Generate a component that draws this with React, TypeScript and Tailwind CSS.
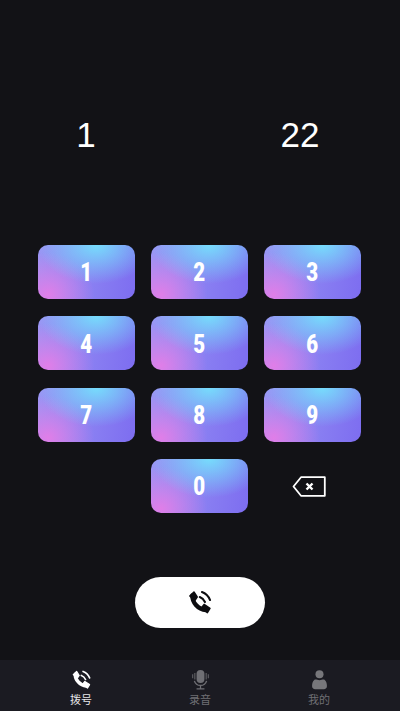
const sans = { fontFamily: '"Liberation Sans", Arial, sans-serif' };

const keys = ['1', '2', '3', '4', '5', '6', '7', '8', '9'];

function PhoneIcon({ className }: { className: string }) {
  return (
    <svg viewBox="0 0 24 24" className={className} fill="none" stroke="currentColor" strokeLinecap="round">
      <path d="M5 6C4.6 12 10 19 17.5 19.4" strokeWidth="4" />
      <path d="M2.6 6.4L6.4 2.8L9.4 7.4L7.2 10.6Z" fill="currentColor" strokeWidth="1.4" strokeLinejoin="round" />
      <path d="M13.4 17.2L15.8 14.2L21.2 17.8L18.8 21.8Z" fill="currentColor" strokeWidth="1.4" strokeLinejoin="round" />
      <path d="M11.8 7.4C14 8.2 15.6 9.8 16.6 12" strokeWidth="1.9" />
      <path d="M13.8 2.8C17.2 4 19.9 6.8 21.3 10.2" strokeWidth="1.9" />
    </svg>
  );
}

function MicIcon() {
  return (
    <svg viewBox="0 0 24 24" className="w-[21px] h-[21px] text-[#6f6f74]" fill="none" stroke="currentColor">
      <rect x="7.5" y="1" width="9" height="15" rx="4.5" fill="currentColor" stroke="none" />
      <path d="M5.5 4.5V12M3 6V10.5M18.5 4.5V12M21 6V10.5" strokeWidth="1.5" opacity="0.7" />
      <path d="M5 13.5C6 17 8.8 18.8 12 18.8C15.2 18.8 18 17 19 13.5" strokeWidth="1.5" />
      <path d="M12 19V22.5M7.5 22.8H16.5" strokeWidth="1.5" />
    </svg>
  );
}

function PersonIcon() {
  return (
    <svg viewBox="0 0 24 24" className="w-[21px] h-[21px] text-[#77777b]" fill="currentColor">
      <circle cx="12" cy="6" r="4.6" />
      <path d="M6 12.5C7.5 11.2 9.5 12.8 12 12.8C14.5 12.8 16.5 11.2 18 12.5C20 14.2 20.5 17 20.5 19.5C20.5 22 19 23 17 23H7C5 23 3.5 22 3.5 19.5C3.5 17 4 14.2 6 12.5Z" />
    </svg>
  );
}

function Key({ label }: { label: string }) {
  return (
    <button
      className="h-[54px] rounded-[10px] flex items-center justify-center text-white text-[25px] font-black bg-[radial-gradient(ellipse_60%_72%_at_60%_0%,#76dcfc_0%,rgba(118,220,252,0)_100%),radial-gradient(ellipse_48%_78%_at_10%_92%,#e07ee8_0%,rgba(224,126,232,0)_100%),linear-gradient(100deg,#9a96f4_0%,#8a80f2_55%,#7d6df0_100%)]"
      style={{ fontFamily: 'Roboto, "Liberation Sans", sans-serif' }}
    >
      <span className="inline-block scale-x-[0.82] translate-y-[1px]">{label}</span>
    </button>
  );
}

function Tab({ label, active, children }: { label: string; active?: boolean; children: React.ReactNode }) {
  return (
    <div className="flex flex-col items-center">
      <div className="h-[22px] flex items-center justify-center">{children}</div>
      <span
        className={`text-[11px] leading-[14px] mt-[3px] ${active ? 'text-[#e8e8ea]' : 'text-[#6f6f74]'}`}
        style={{ fontFamily: '"Liberation Sans", "Noto Sans CJK SC", sans-serif' }}
      >
        {label}
      </span>
    </div>
  );
}

export default function App() {
  return (
    <div className="w-[400px] h-[711px] bg-[#121216] flex flex-col overflow-hidden" style={sans}>
      {/* Number display */}
      <div className="pt-[115px] h-[245px] flex pl-[21px] text-white text-[35px] leading-[40px]">
        <div className="w-[130px] text-center">1</div>
        <div className="w-[130px] ml-[84px] text-center">22</div>
      </div>

      {/* Keypad */}
      <div className="px-[38px] grid grid-cols-[97px_97px_97px] gap-x-[16px] gap-y-[17.3px]">
        {keys.map((k) => (
          <Key key={k} label={k} />
        ))}
        <div />
        <Key label="0" />
        <div className="flex items-center justify-center">
          <svg viewBox="0 0 34 21" className="w-[34px] h-[21px] mr-[7px] mt-[1px]" fill="none" stroke="white">
            <path d="M9 1.2H32.8V19.8H9L1.5 10.5Z" strokeWidth="1.8" strokeLinejoin="round" />
            <path d="M14.5 7.5L20.5 13.5M20.5 7.5L14.5 13.5" strokeWidth="2.4" />
          </svg>
        </div>
      </div>

      {/* Call button */}
      <div className="flex justify-center mt-[64px]">
        <button className="w-[130px] h-[51px] rounded-full bg-white flex items-center justify-center text-[#0d0d10]">
          <PhoneIcon className="w-[26px] h-[26px]" />
        </button>
      </div>

      {/* Bottom tabs */}
      <div className="mt-auto h-[51px] bg-[#1b1b22] pt-[8px] grid grid-cols-[119px_119px_119px] justify-center">
        <Tab label="拨号" active>
          <PhoneIcon className="w-[21px] h-[21px] text-white" />
        </Tab>
        <Tab label="录音">
          <MicIcon />
        </Tab>
        <Tab label="我的">
          <PersonIcon />
        </Tab>
      </div>
    </div>
  );
}
